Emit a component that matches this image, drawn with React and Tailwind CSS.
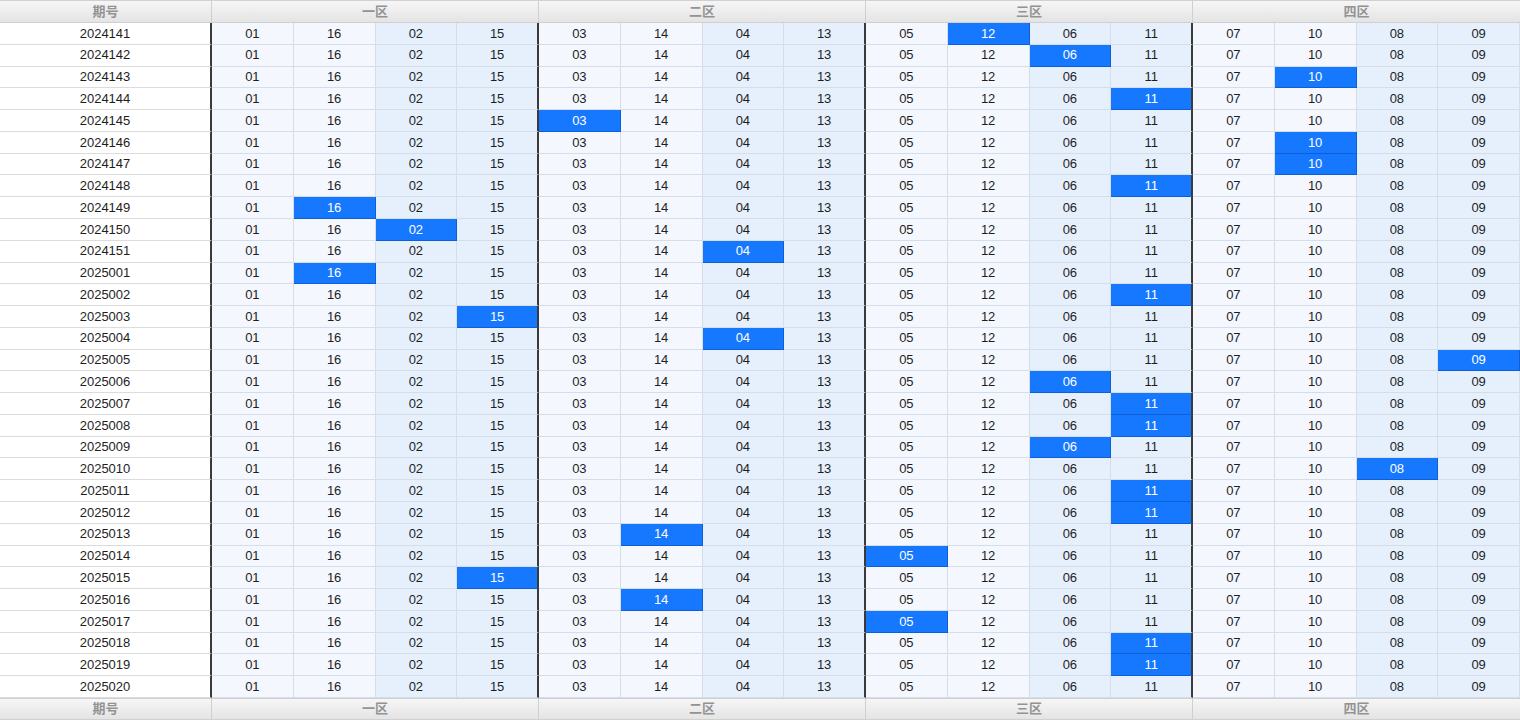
import React from "react";

const COLS = ["01","16","02","15","03","14","04","13","05","12","06","11","07","10","08","09"];
const ROWS = [
  ["2024141","12"],["2024142","06"],["2024143","10"],["2024144","11"],["2024145","03"],
  ["2024146","10"],["2024147","10"],["2024148","11"],["2024149","16"],["2024150","02"],
  ["2024151","04"],["2025001","16"],["2025002","11"],["2025003","15"],["2025004","04"],
  ["2025005","09"],["2025006","06"],["2025007","11"],["2025008","11"],["2025009","06"],
  ["2025010","08"],["2025011","11"],["2025012","11"],["2025013","14"],["2025014","05"],
  ["2025015","15"],["2025016","14"],["2025017","05"],["2025018","11"],["2025019","11"],
  ["2025020",null],
];
const GROUPS = ["一区","二区","三区","四区"];

function HeaderBar({ h }) {
  return (
    <div className={"grid shrink-0 grid-cols-[212px_repeat(4,minmax(0,1fr))] bg-gradient-to-b from-[#f6f6f6] to-[#e4e4e4] border-y border-[#d0d0d0] text-[13px] font-bold text-[#939393] [font-family:'Liberation_Sans','Noto_Sans_CJK_SC',sans-serif] " + h}>
      <div className="flex items-center justify-center border-r border-[#cfcfcf]">期号</div>
      {GROUPS.map((g, i) => (
        <div key={g} className={"flex items-center justify-center " + (i < 3 ? "border-r border-[#cfcfcf]" : "")}>{g}</div>
      ))}
    </div>
  );
}

export default function App() {
  return (
    <div className="flex h-[720px] w-[1520px] flex-col overflow-hidden bg-white text-[13px] text-[#1e1e1e] [font-family:'Liberation_Sans',Arial,sans-serif]">
      <HeaderBar h="h-[23px]" />
      <div className="grid min-h-0 flex-1 grid-cols-[212px_repeat(16,minmax(0,1fr))] grid-rows-[repeat(31,minmax(0,1fr))]">
        {ROWS.map(([id, hit]) => (
          <React.Fragment key={id}>
            <div className="flex items-center justify-center border-b border-r-2 border-b-[#dcdcdc] border-r-[#3a3a3a] bg-white">{id}</div>
            {COLS.map((c, j) => {
              const isHit = c === hit;
              const groupEnd = j % 4 === 3 && j !== 15;
              const dark = j % 4 >= 2;
              const bg = isHit
                ? "bg-[#1677ff] text-white border-b-[#0e5fd6]"
                : dark
                ? "bg-[#e6f0fd] border-b-[#d5dde8]"
                : "bg-[#f4f8fe] border-b-[#d5dde8]";
              const br = groupEnd ? "border-r-2 border-r-[#3a3a3a]" : isHit ? "border-r border-r-[#0e5fd6]" : "border-r border-r-[#d5dde8]";
              return (
                <div key={c} className={"flex items-center justify-center border-b " + br + " " + bg}>
                  {c}
                </div>
              );
            })}
          </React.Fragment>
        ))}
      </div>
      <HeaderBar h="h-[22px]" />
    </div>
  );
}
